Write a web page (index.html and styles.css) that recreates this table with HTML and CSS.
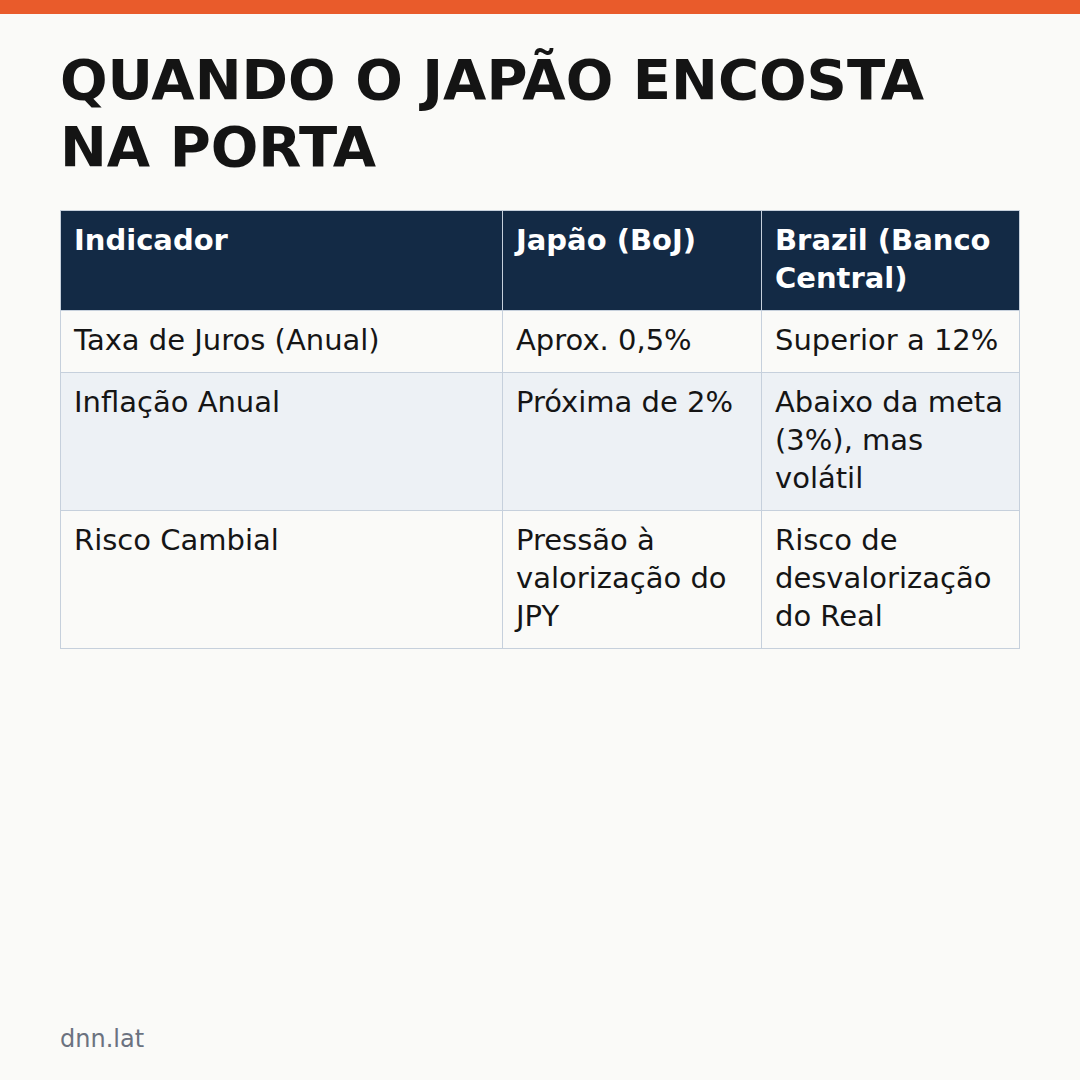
FILE: index.html
```html
<!DOCTYPE html>
<html lang="pt-BR">
<head>
    <meta charset="UTF-8">
    <meta name="viewport" content="width=device-width, initial-scale=1.0">
    <title>Quando o Japão encosta na porta</title>
    <link rel="stylesheet" href="styles.css">
</head>
<body>
    <div class="top-bar"></div>
    <main class="slide">
        <h1 class="title">QUANDO O JAPÃO ENCOSTA NA PORTA</h1>

        <table class="compare">
            <thead>
                <tr>
                    <th class="col-ind">Indicador</th>
                    <th class="col-jp">Japão (BoJ)</th>
                    <th>Brazil (Banco Central)</th>
                </tr>
            </thead>
            <tbody>
                <tr>
                    <td>Taxa de Juros (Anual)</td>
                    <td>Aprox. 0,5%</td>
                    <td>Superior a 12%</td>
                </tr>
                <tr>
                    <td>Inflação Anual</td>
                    <td>Próxima de 2%</td>
                    <td>Abaixo da meta (3%), mas volátil</td>
                </tr>
                <tr>
                    <td>Risco Cambial</td>
                    <td>Pressão à valorização do JPY</td>
                    <td>Risco de desvalorização do Real</td>
                </tr>
            </tbody>
        </table>

        <footer class="footer">dnn.lat</footer>
    </main>
</body>
</html>
```

FILE: styles.css
```css
body {
    margin: 0;
    padding: 0;
    background: #fafaf8;
    color: #151515;
    font-family: "DejaVu Sans", Verdana, sans-serif;
    width: 1080px;
    height: 1080px;
    display: flex;
    flex-direction: column;
    overflow: hidden;
}

.top-bar {
    height: 14px;
    background: #e95b2b;
    flex-shrink: 0;
}

.slide {
    flex: 1;
    display: flex;
    flex-direction: column;
    padding: 32px 60px 27px 60px;
}

.title {
    margin: 0 0 30px 0;
    font-size: 56px;
    line-height: 1.2;
    font-weight: bold;
    color: #141414;
}

.compare {
    width: 960px;
    border-collapse: collapse;
    font-size: 29px;
    line-height: 38px;
}

.compare th,
.compare td {
    border: 1px solid #c6d0dc;
    padding: 10px 13px 13px 13px;
    text-align: left;
    vertical-align: top;
}

.compare th {
    background: #132a45;
    color: #fff;
    font-weight: bold;
}

.compare .col-ind {
    width: 415px;
}

.compare .col-jp {
    width: 232px;
}

.compare tbody tr:nth-child(even) td {
    background: #edf1f5;
}

.footer {
    margin-top: auto;
    font-size: 24px;
    color: #6b7280;
}
```
